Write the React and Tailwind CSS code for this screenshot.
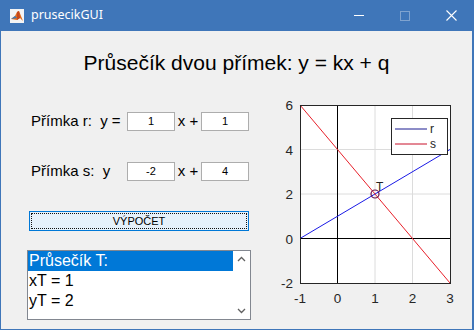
import React from "react";

const X = (u) => 20 + (u + 1) * 37.5;
const Y = (v) => 9 + (6 - v) * 22.25;

function MatlabIcon() {
  return (
    <svg width="14" height="14" viewBox="0 0 14 14">
      <rect x="0" y="0" width="14" height="14" fill="#f4f4f4" />
      <path d="M1 10 L5 7 L7 3 L9 2 L13 12 L10 9 L7 11 Z" fill="#e06a1b" />
      <path d="M1 10 L5 7 L7 9 Z" fill="#3a78b8" />
      <path d="M7 3 L9 2 L10 9 L7 11 Z" fill="#c5471a" />
    </svg>
  );
}

function TitleBar() {
  return (
    <div className="h-[31px] flex items-center text-white">
      <div className="ml-[10px] mt-[1px]">
        <MatlabIcon />
      </div>
      <span className="ml-[7px] text-[12.5px]" style={{ fontFamily: "'Segoe UI', 'Noto Sans', sans-serif" }}>
        prusecikGUI
      </span>
      <div className="ml-auto flex items-center h-full">
        <div className="w-[46px] h-full flex items-center justify-center">
          <div className="w-[10px] h-px bg-white" />
        </div>
        <div className="w-[46px] h-full flex items-center justify-center">
          <div className="w-[10px] h-[10px] border border-[#7fa3cf]" />
        </div>
        <div className="w-[46px] h-full flex items-center justify-center">
          <svg width="11" height="11" viewBox="0 0 11 11">
            <path d="M0.5 0.5 L10.5 10.5 M10.5 0.5 L0.5 10.5" stroke="#fff" strokeWidth="1.1" />
          </svg>
        </div>
      </div>
    </div>
  );
}

function NumInput({ value }) {
  return (
    <div className="w-[48px] h-[19px] bg-white border border-[#adadad] flex items-center justify-center text-[11px] text-black">
      {value}
    </div>
  );
}

function Plot() {
  const grid = "#dcdcdc";
  return (
    <svg width="184" height="215" viewBox="0 0 184 215" style={{ fontFamily: "'Liberation Sans', Arial, sans-serif" }}>
      <rect x="20" y="9" width="150" height="178" fill="#fff" />
      {[1, 2].map((u) => (
        <line key={u} x1={X(u)} y1="9" x2={X(u)} y2="187" stroke={grid} strokeWidth="1" />
      ))}
      {[2, 4].map((v) => (
        <line key={v} x1="20" y1={Y(v)} x2="170" y2={Y(v)} stroke={grid} strokeWidth="1" />
      ))}
      <line x1={X(0)} y1="9" x2={X(0)} y2="187" stroke="#000" strokeWidth="1" />
      <line x1="20" y1={Y(0)} x2="170" y2={Y(0)} stroke="#000" strokeWidth="1" />
      <line x1={X(-1)} y1={Y(0)} x2={X(3)} y2={Y(4)} stroke="#1a1ae6" strokeWidth="1" />
      <line x1={X(-1)} y1={Y(6)} x2={X(3)} y2={Y(-2)} stroke="#e8202a" strokeWidth="1" />
      <circle cx={X(1)} cy={Y(2)} r="4" fill="none" stroke="#6a0f4a" strokeWidth="1.2" />
      <text x={X(1) + 1} y={Y(2) - 3} fontSize="12" fill="#222">T</text>
      <rect x="20.5" y="9.5" width="150" height="178" fill="none" stroke="#262626" strokeWidth="1" />
      <rect x="111.5" y="22.5" width="56" height="36" fill="#fff" stroke="#262626" strokeWidth="1" />
      <line x1="115" y1="33" x2="147" y2="33" stroke="#1a1a90" strokeWidth="1" />
      <text x="150" y="37" fontSize="12" fill="#262626">r</text>
      <line x1="115" y1="48" x2="147" y2="48" stroke="#c8102a" strokeWidth="1" />
      <text x="150" y="52" fontSize="12" fill="#262626">s</text>
      {[6, 4, 2, 0, -2].map((v) => (
        <text key={v} x="13" y={Y(v) + 5} fontSize="13.5" fill="#262626" textAnchor="end">
          {v}
        </text>
      ))}
      {[-1, 0, 1, 2, 3].map((u) => (
        <text key={u} x={X(u)} y="207" fontSize="13.5" fill="#262626" textAnchor="middle">
          {u}
        </text>
      ))}
    </svg>
  );
}

function ListBox() {
  return (
    <div className="w-[224px] h-[70px] bg-white border border-[#828790] flex text-[16px] text-black">
      <div className="flex-1 flex flex-col leading-[20px]">
        <div className="bg-[#0078d7] text-white pl-[1px]">Průsečík T:</div>
        <div className="pl-[1px]">xT = 1</div>
        <div className="pl-[1px]">yT = 2</div>
      </div>
      <div className="w-[17px] flex flex-col justify-between items-center py-[5px]">
        <svg width="9" height="6" viewBox="0 0 9 6">
          <path d="M1 5 L4.5 1.5 L8 5" fill="none" stroke="#606060" strokeWidth="1.3" />
        </svg>
        <svg width="9" height="6" viewBox="0 0 9 6">
          <path d="M1 1 L4.5 4.5 L8 1" fill="none" stroke="#606060" strokeWidth="1.3" />
        </svg>
      </div>
    </div>
  );
}

export default function App() {
  return (
    <div
      className="w-[474px] h-[330px] bg-[#3f76b9] flex flex-col"
      style={{ fontFamily: "'Liberation Sans', Arial, sans-serif" }}
    >
      <TitleBar />
      <div className="flex-1 mx-[1px] mr-[2px] mb-[1px] bg-[#f0f0f0] flex flex-col">
        <div className="h-[24px] mt-[20px] text-center text-[21px] leading-[24px] text-black">
          Průsečík dvou přímek: y = kx + q
        </div>
        <div className="flex items-start">
          <div className="flex flex-col pt-[37px] pl-[26px] w-[279px]">
            <div className="flex items-center h-[19px] text-[15px] text-black">
              <span className="ml-[4px] w-[96px]">Přímka r:&nbsp; y =</span>
              <NumInput value="1" />
              <span className="w-[26px] text-center">x +</span>
              <NumInput value="1" />
            </div>
            <div className="flex items-center h-[19px] mt-[31px] text-[15px] text-black">
              <span className="ml-[4px] w-[96px]">Přímka s:&nbsp; y</span>
              <NumInput value="-2" />
              <span className="w-[26px] text-center">x +</span>
              <NumInput value="4" />
            </div>
            <div className="ml-[2px] mt-[30px] w-[220px] h-[20px] bg-[#e5f1fb] border border-[#0078d7] p-[1px]">
              <div className="w-full h-full border border-dotted border-[#111] flex items-center justify-center text-[11px] text-black">
                VÝPOČET
              </div>
            </div>
            <div className="mt-[19px]">
              <ListBox />
            </div>
          </div>
          <div className="mt-[21px]">
            <Plot />
          </div>
        </div>
      </div>
    </div>
  );
}
